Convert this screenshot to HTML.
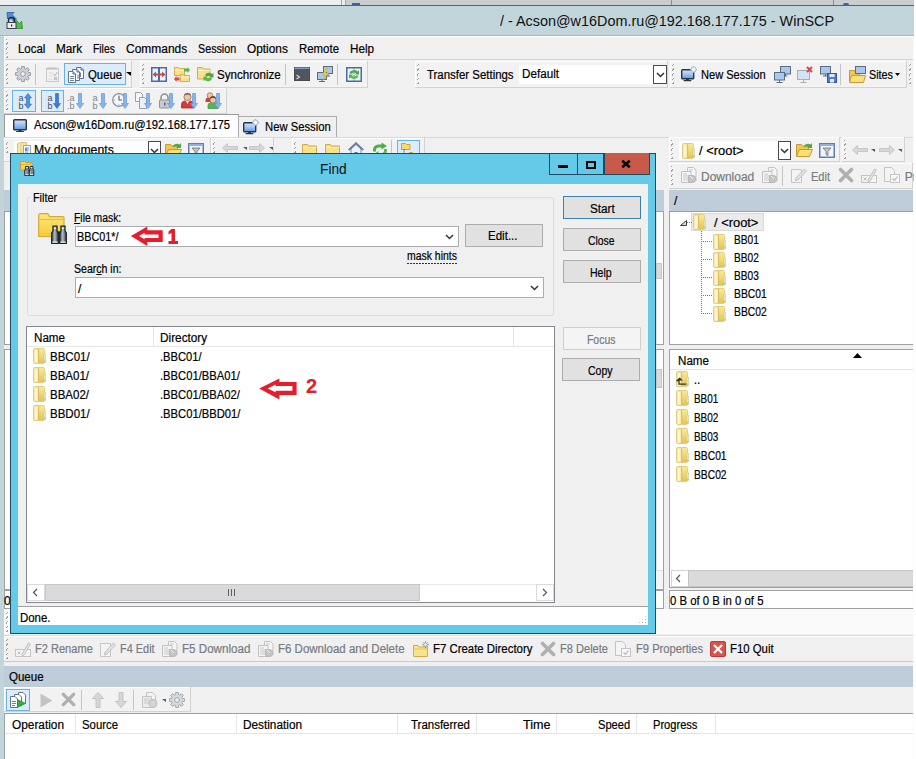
<!DOCTYPE html>
<html><head><meta charset="utf-8">
<style>
*{margin:0;padding:0;box-sizing:border-box}
html,body{width:916px;height:759px;overflow:hidden;background:#f0f0f0;font-family:"Liberation Sans",sans-serif;font-size:12px;color:#000}
.a{position:absolute}
.t{position:absolute;white-space:nowrap;line-height:14px;transform-origin:0 0;-webkit-text-stroke:0.2px currentColor}
.g{color:#787b80}
.grip{position:absolute;width:2px;background:repeating-linear-gradient(-50deg,transparent 0 0.6px,#a0a0a0 0.6px 1.5px,#fff 1.5px 2.2px,transparent 2.2px 3px)}
.sep{position:absolute;width:1px;background:#c4c4c4}
svg.i{position:absolute;overflow:visible}
.tb{position:absolute;background:#f2f2f2;border-bottom:1px solid #d2d2d2;border-right:1px solid #d2d2d2;box-shadow:inset 1px 1px 0 #fff}
.btn{position:absolute;background:#e1e1e1;border:1px solid #adadad}
</style></head><body>
<svg width="0" height="0" style="position:absolute">
<defs>
<linearGradient id="fy" x1="0" y1="0" x2="1" y2="0"><stop offset="0" stop-color="#f8e7a6"/><stop offset="1" stop-color="#e9c860"/></linearGradient>
<symbol id="gear" viewBox="0 0 16 16"><path d="M13.40 6.51 L15.59 6.68 L15.59 9.32 L13.40 9.49 L12.87 10.76 L14.30 12.43 L12.43 14.30 L10.76 12.87 L9.49 13.40 L9.32 15.59 L6.68 15.59 L6.51 13.40 L5.24 12.87 L3.57 14.30 L1.70 12.43 L3.13 10.76 L2.60 9.49 L0.41 9.32 L0.41 6.68 L2.60 6.51 L3.13 5.24 L1.70 3.57 L3.57 1.70 L5.24 3.13 L6.51 2.60 L6.68 0.41 L9.32 0.41 L9.49 2.60 L10.76 3.13 L12.43 1.70 L14.30 3.57 L12.87 5.24Z" fill="#cdd1d6" stroke="#8d9399" stroke-width="0.9"/><circle cx="8" cy="8" r="2.3" fill="#f4f4f4" stroke="#8d9399" stroke-width="0.9"/></symbol>
<symbol id="gearg" viewBox="0 0 16 16"><path d="M13.40 6.51 L15.59 6.68 L15.59 9.32 L13.40 9.49 L12.87 10.76 L14.30 12.43 L12.43 14.30 L10.76 12.87 L9.49 13.40 L9.32 15.59 L6.68 15.59 L6.51 13.40 L5.24 12.87 L3.57 14.30 L1.70 12.43 L3.13 10.76 L2.60 9.49 L0.41 9.32 L0.41 6.68 L2.60 6.51 L3.13 5.24 L1.70 3.57 L3.57 1.70 L5.24 3.13 L6.51 2.60 L6.68 0.41 L9.32 0.41 L9.49 2.60 L10.76 3.13 L12.43 1.70 L14.30 3.57 L12.87 5.24Z" fill="#d6d9dc" stroke="#9a9fa4" stroke-width="0.9"/><circle cx="8" cy="8" r="2.3" fill="#f0f0f0" stroke="#9a9fa4" stroke-width="0.9"/></symbol>
<symbol id="note" viewBox="0 0 16 16"><rect x="1.5" y="2.5" width="12" height="13" fill="#f3f3f3" stroke="#c9c9c9"/><path d="M3 1v3M5 1v3M7 1v3M9 1v3M11 1v3" stroke="#bdbdbd"/><path d="M3.5 7h5M3.5 10h4M3.5 13h4" stroke="#d6d6d6"/><path d="M8.5 8l1.5 1.5 2.5-3.5" stroke="#c3c3c3" fill="none" stroke-width="1.2"/><path d="M9 11l3 3M12 11l-3 3" stroke="#bdbdbd" stroke-width="1.3"/></symbol>
<symbol id="docs" viewBox="0 0 16 16"><path d="M8.5 0.5H13L15.5 3V11.5H8.5Z" fill="#fff" stroke="#5f7389"/><path d="M13 0.5V3H15.5" fill="none" stroke="#5f7389"/><path d="M4.5 2.5H9L11.5 5V13.5H4.5Z" fill="#fff" stroke="#5f7389"/><path d="M9 2.5V5H11.5" fill="none" stroke="#5f7389"/><path d="M0.5 4.5H5L7.5 7V15.5H0.5Z" fill="#fff" stroke="#5f7389"/><path d="M5 4.5V7H7.5" fill="none" stroke="#5f7389"/><path d="M2 9.5H6M2 11.5H6M2 13.5H6M12.5 5.5V10M10 7.5V12" stroke="#6d8096"/></symbol>
<symbol id="compare" viewBox="0 0 16 15"><rect x="0.75" y="0.75" width="14.5" height="13.5" fill="#eef4fb" stroke="#4a6ca3" stroke-width="1.5"/><rect x="7" y="0.5" width="2" height="14" fill="#4a6ca3"/><path d="M1.5 7.5L5 4.5V6.5H11V4.5L14.5 7.5L11 10.5V8.5H5V10.5Z" fill="#c44d49"/></symbol>
<symbol id="fsync" viewBox="0 0 16 16"><path d="M0.5 1.5h4l1 1h5v7h-10z" fill="#f8e08c" stroke="#d2ab4e"/><path d="M0.5 4h10" stroke="#fff3c4"/><path d="M6.5 8.5h3l1 1h5v6h-9z" fill="#f8e08c" stroke="#d2ab4e"/><path d="M6.5 11h9" stroke="#fff3c4"/><path d="M10 2.5h3.5v-1.5l2.5 3l-2.5 3v-1.5h-3.5z" fill="#5ab44c"/><path d="M5.5 14.5h-3v1.5l-2.5-3l2.5-3v1.5h3z" fill="#e04848"/></symbol>
<symbol id="fsync2" viewBox="0 0 17 17"><path d="M0.5 1.5h5l1 1.5h6.5v10h-12.5z" fill="#f8e08c" stroke="#d2ab4e"/><path d="M1 4.5h12" stroke="#fff3c4"/><path d="M8 9.5a4 3.5 0 0 1 7-1.5l1.5-1v4.5h-4.5l1.5-1a2.5 2 0 0 0-4 0z" fill="#4ba34a"/><path d="M15 12.5a4 3.5 0 0 1-7 1.5l-1.5 1v-4.5h4.5l-1.5 1a2.5 2 0 0 0 4 0z" fill="#5ab84f"/></symbol>
<symbol id="term" viewBox="0 0 16 14"><rect x="0" y="0" width="16" height="14" fill="#51565d"/><rect x="0" y="0" width="16" height="2" fill="#7f9cc6"/><rect x="0" y="0" width="16" height="14" fill="none" stroke="#40454b"/><path d="M2.5 8l3 2-3 2" stroke="#dde" fill="none" stroke-width="1.1"/></symbol>
<symbol id="putty" viewBox="0 0 16 16"><rect x="6.5" y="0.5" width="9" height="7" fill="#a9c8ef" stroke="#5b6b80"/><path d="M9 10h4M11 8v2" stroke="#5b6b80"/><rect x="0.5" y="6.5" width="9" height="7" fill="#a9c8ef" stroke="#5b6b80"/><path d="M2 15.5h6M5 13.5v2" stroke="#5b6b80"/><path d="M10 1L5.5 8.5h3l-3 6.5 6-8h-3l2.5-6z" fill="#f4d545" stroke="#c7a12a" stroke-width="0.5"/></symbol>
<symbol id="rfbox" viewBox="0 0 16 15"><rect x="0.75" y="0.75" width="14.5" height="13.5" fill="#e9f3f4" stroke="#4a6ca3" stroke-width="1.5"/><path d="M8 1.5v12" stroke="#4a6ca3" stroke-dasharray="1 1.2"/><path d="M3.5 6a4.5 3.5 0 0 1 8-1.5l1.5-1.2v4.2h-4.2l1.3-1a2.8 2 0 0 0-5 .5z" fill="#54a24c"/><path d="M12.5 9a4.5 3.5 0 0 1-8 1.5l-1.5 1.2v-4.2h4.2l-1.3 1a2.8 2 0 0 0 5-.5z" fill="#5fb354"/></symbol>
<symbol id="ab" viewBox="0 0 8 16"><text x="0.5" y="7.5" font-family="Liberation Sans" font-size="9" fill="currentColor">a</text><text x="0.5" y="15.5" font-family="Liberation Sans" font-size="9" fill="currentColor">b</text></symbol>
<symbol id="darr" viewBox="0 0 8 16"><path d="M2.5 0.5h3v10h2l-3.5 5l-3.5-5h2z" fill="currentColor" stroke="#2f63b5" stroke-width="0.6"/></symbol>
<symbol id="darrl" viewBox="0 0 8 16"><path d="M2.5 0.5h3v10h2l-3.5 5l-3.5-5h2z" fill="#86b4ec" stroke="#5b8fd6" stroke-width="0.6"/></symbol>
<symbol id="udarr" viewBox="0 0 8 16"><path d="M4 0.5l3.5 4.5h-2v6h2l-3.5 4.5l-3.5-4.5h2v-6h-2z" fill="#4f92e3" stroke="#2f63b5" stroke-width="0.6"/></symbol>
<symbol id="mon" viewBox="0 0 14 13"><defs><linearGradient id="scr" x1="0" y1="0" x2="0" y2="1"><stop offset="0" stop-color="#d6e6fb"/><stop offset="0.45" stop-color="#a8c8f4"/><stop offset="1" stop-color="#5b9bf0"/></linearGradient></defs><rect x="0.7" y="0.7" width="12.6" height="10" rx="0.8" fill="url(#scr)" stroke="#2c3540" stroke-width="1.4"/><rect x="5.5" y="11" width="3" height="1" fill="#2c3540"/><rect x="3" y="12" width="8" height="1.2" rx="0.6" fill="#2c3540"/></symbol>
<symbol id="monstar" viewBox="0 0 16 16"><rect x="0.7" y="3.7" width="12" height="9" rx="0.8" fill="url(#scr)" stroke="#2c3540" stroke-width="1.4"/><rect x="5" y="13" width="3" height="1" fill="#2c3540"/><rect x="2.5" y="14" width="8" height="1.2" rx="0.6" fill="#2c3540"/><circle cx="12.5" cy="3.5" r="2.6" fill="#f4f7fb" stroke="#8fa6c4" stroke-width="0.8"/><path d="M12.5 0v1.2M12.5 5.8v1.2M9 3.5h1.2M14.8 3.5h1.2" stroke="#8fa6c4" stroke-width="0.8"/></symbol>
<symbol id="fold" viewBox="0 0 13 16"><defs><linearGradient id="ffg" x1="0" y1="0" x2="0" y2="1"><stop offset="0" stop-color="#f7ea98"/><stop offset="1" stop-color="#e6c455"/></linearGradient></defs><rect x="0.5" y="0.5" width="11" height="15" rx="1.2" fill="#f5e6a6" stroke="#e2cc80"/><rect x="1.8" y="2" width="2.6" height="12.5" fill="#fbf5d2"/><path d="M5.6 1H11.2V15H5.6Z" fill="url(#ffg)"/><path d="M5.6 1.2V15" stroke="#d9b955" stroke-width="0.9"/><path d="M11 6H12.5V14.5H11Z" fill="#f1f1d2" stroke="#c9c98e" stroke-width="0.6"/><path d="M11.3 12.5H12.3V14.3H11.3Z" fill="#9cc28a"/></symbol>
<symbol id="foldup" viewBox="0 0 13 16"><use href="#fold"/><path d="M3.8 7.2L1.2 9.6h1.8v3.6h7.2" fill="none" stroke="#3b3420" stroke-width="1.3"/><path d="M3.8 6.4L0.8 9.6h6z" fill="#3b3420"/></symbol>
<symbol id="fopen" viewBox="0 0 17 15"><path d="M0.5 2.5h5l1 1.5h6v10h-12z" fill="#efc94f" stroke="#c79a32"/><path d="M0.5 14.5l3-7h13l-3 7z" fill="#fbe07a" stroke="#c79a32"/><path d="M8 4.5a4 3 0 0 1 6.5-2l1.5-1.5v5h-5l1.5-1.3a2.5 2 0 0 0-3.5.8z" fill="#4fa84a"/></symbol>
<symbol id="filter" viewBox="0 0 16 15"><rect x="0.75" y="0.75" width="14.5" height="13.5" fill="#f2f6fb" stroke="#5f7fb0" stroke-width="1.5"/><rect x="1" y="1" width="14" height="2" fill="#8fb1dd"/><path d="M4 5h8l-3 3.5v4l-2 -1v-3z" fill="#c0c4c8" stroke="#6e7378" stroke-width="0.8"/></symbol>
<symbol id="back" viewBox="0 0 16 10"><path d="M0.5 5l5-4.5v3h10v3h-10v3z" fill="#d7d7d7" stroke="#c6c6c6"/></symbol>
<symbol id="fwd" viewBox="0 0 16 10"><path d="M15.5 5l-5-4.5v3h-10v3h10v3z" fill="#d7d7d7" stroke="#c6c6c6"/></symbol>
<symbol id="fyel" viewBox="0 0 15 14"><path d="M0.5 1.5h5l1 1.5h8v10.5h-14z" fill="#f8e08c" stroke="#cfa84a"/><path d="M1 4.5h13.5" stroke="#fff0b8"/></symbol>
<symbol id="home" viewBox="0 0 16 15"><path d="M3 7v7.5h10v-7.5l-5-4.5z" fill="#eef2f8" stroke="#7a8ea9"/><path d="M0.8 8l7.2-6.8 7.2 6.8" fill="none" stroke="#687d99" stroke-width="1.8"/><rect x="6.5" y="10" width="3" height="4.5" fill="#4e77b5"/></symbol>
<symbol id="rfgreen" viewBox="0 0 16 16"><path d="M2.5 9.5V8a4 4 0 0 1 4-4H10" fill="none" stroke="#4fae4b" stroke-width="3"/><path d="M9.5 0.5L15 4L9.5 7.5Z" fill="#4fae4b"/><path d="M13.5 7V8.5a4 4 0 0 1-4 4H6" fill="none" stroke="#5cbb55" stroke-width="3"/><path d="M6.5 9L1 12.5L6.5 16Z" fill="#5cbb55"/></symbol>
<symbol id="dl" viewBox="0 0 16 16"><path d="M6.5 0.5h6l2.5 2.5v7h-8.5z" fill="#f6f6f6" stroke="#c2c2c2"/><path d="M8 3h4" stroke="#c6c6c6"/><path d="M0.5 4.5h9.5v11h-9.5z" fill="#f6f6f6" stroke="#c2c2c2"/><path d="M2 7h4M2 9h6M2 11h6M2 13h6" stroke="#c8c8c8"/><path d="M7.5 8.5h5l2.5 2v3l-2 2h-5.5z" fill="#c4c4c4" stroke="#b4b4b4" stroke-width="0.8"/><path d="M9 9l3 3" stroke="#f4f4f4"/></symbol>
<symbol id="edit" viewBox="0 0 16 16"><path d="M0.5 2.5h10v13h-10z" fill="#f4f4f4" stroke="#c6c6c6"/><path d="M5 11l8.5-9 2 2-8.5 9-2.5 .8z" fill="#e2e2e2" stroke="#b5b5b5" stroke-width="0.8"/></symbol>
<symbol id="xg" viewBox="0 0 16 16"><path d="M2.5 2.5l11 11M13.5 2.5l-11 11" stroke="#b0b0b0" stroke-width="3.6" stroke-linecap="round"/></symbol>
<symbol id="ren" viewBox="0 0 16 16"><rect x="0.5" y="8.5" width="15" height="7" fill="#f4f4f4" stroke="#c4c4c4"/><path d="M2.5 10.5l3 3M5.5 10.5l-3 3" stroke="#c0c0c0"/><path d="M7 13l6.5-11 1.8 1.2-6.3 11-1.6.5z" fill="#e4e4e4" stroke="#b8b8b8" stroke-width="0.8"/></symbol>
<symbol id="props" viewBox="0 0 16 16"><path d="M0.5 0.5h7l3 3v11h-10z" fill="#f4f4f4" stroke="#c4c4c4"/><rect x="6.5" y="7.5" width="9" height="8" fill="#f8f8f8" stroke="#c4c4c4"/><path d="M8.5 11.5l2 2 3-4" stroke="#b3b3b3" fill="none" stroke-width="1.1"/></symbol>
<symbol id="fnew" viewBox="0 0 16 16"><path d="M0.5 4.5h4.5l1.2 1.5h8.3v9.5h-14z" fill="#f9e38c" stroke="#d3ac48"/><path d="M1 8h13.5" stroke="#e6c45a"/><path d="M12.5 0.2v2M12.5 5v2.2M9.2 3.6h2M13.8 3.6h2.2M10.2 1.3l1.2 1.2M13.6 4.7l1.2 1.2M14.8 1.3l-1.2 1.2M11.4 4.7l-1.2 1.2" stroke="#8193ab" stroke-width="0.9"/><circle cx="12.5" cy="3.6" r="1.7" fill="#fff" stroke="#8193ab" stroke-width="0.8"/></symbol>
<symbol id="quit" viewBox="0 0 16 16"><rect x="0.5" y="0.5" width="15" height="15" rx="1.5" fill="#d9534f" stroke="#b93a37"/><path d="M4 4l8 8M12 4l-8 8" stroke="#fff" stroke-width="2.2"/></symbol>
<symbol id="qdocs" viewBox="0 0 16 16"><path d="M8.5 0.5H13L15.5 3V11.5H8.5Z" fill="#fff" stroke="#5f7389"/><path d="M4.5 2.5H9L11.5 5V13.5H4.5Z" fill="#fff" stroke="#5f7389"/><path d="M0.5 4.5H5L7.5 7V15.5H0.5Z" fill="#fff" stroke="#5f7389"/><path d="M2 9.5H6M2 11.5H6M2 13.5H5" stroke="#6d8096"/><path d="M7.5 7.5L15.5 11.5L7.5 15.5Z" fill="#2fae3c" stroke="#1f8a2c" stroke-width="0.6"/></symbol>
<symbol id="play" viewBox="0 0 13 15"><path d="M0.5 0.5L12.5 7.5L0.5 14.5Z" fill="#c4c4c4"/></symbol>
<symbol id="uarr" viewBox="0 0 12 16"><path d="M6 0.5l5.5 6h-3.5v9h-4v-9h-3.5z" fill="#d6d6d6" stroke="#c3c3c3"/></symbol>
<symbol id="darrg" viewBox="0 0 12 16"><path d="M6 15.5l5.5-6h-3.5v-9h-4v9h-3.5z" fill="#d6d6d6" stroke="#c3c3c3"/></symbol>
<symbol id="qcirc" viewBox="0 0 16 16"><path d="M4.5 0.5h6l3 3v6h-9z" fill="#f2f2f2" stroke="#c4c4c4"/><path d="M0.5 4.5h9v11h-9z" fill="#ececec" stroke="#c4c4c4"/><path d="M2 7h6M2 9h6M2 11h5" stroke="#c8c8c8"/><circle cx="11" cy="11.5" r="4" fill="#d4d4d4" stroke="#bdbdbd"/></symbol>
<symbol id="findic" viewBox="0 0 16 16"><path d="M0.5 1.5h4.5l1 1.2h6v7.3h-11.5z" fill="#f5d353" stroke="#c9a12e"/><path d="M1 4.5h11" stroke="#e6bb36"/><path d="M5.5 6.5h3v2.5l.8 1v5.5h-4.6v-5.5l.8-1z" fill="#7d8893" stroke="#22282e" stroke-width="0.9"/><path d="M10 6.5h3v2.5l.8 1v5.5h-4.6v-5.5l.8-1z" fill="#7d8893" stroke="#22282e" stroke-width="0.9"/><path d="M8.6 11h1.6" stroke="#22282e" stroke-width="1.2"/><path d="M6.2 7.5h1.6M10.7 7.5h1.6M5.5 14.6h3M10 14.6h3" stroke="#eef1f4" stroke-width="0.9"/><path d="M6 11v3M10.5 11v3" stroke="#b9c1c9" stroke-width="0.8"/></symbol>
<symbol id="fbino" viewBox="0 0 30 31"><defs><linearGradient id="fyg" x1="0" y1="0" x2="0" y2="1"><stop offset="0" stop-color="#fbe47a"/><stop offset="1" stop-color="#f4cf3a"/></linearGradient><linearGradient id="bng" x1="0" y1="0" x2="1" y2="0"><stop offset="0" stop-color="#3e474f"/><stop offset="0.45" stop-color="#b4bcc4"/><stop offset="1" stop-color="#39414a"/></linearGradient></defs><path d="M0.7 2.2q0-1.5 1.5-1.5h7.5l2 3h13q1.3 0 1.3 1.3v18.5h-25.3z" fill="url(#fyg)" stroke="#d2a93a" stroke-width="1.2"/><path d="M1.5 6.5h24" stroke="#e4bb40" stroke-width="1"/><path d="M1.5 20.5h24" stroke="#e7c24a" stroke-width="0.8"/><path d="M15 13.2h4v4.5l1.3 2.3v10.3h-6.6v-10.3l1.3-2.3z" fill="url(#bng)" stroke="#1c2228" stroke-width="1.3"/><path d="M23 13.2h4v4.5l1.3 2.3v10.3h-6.6v-10.3l1.3-2.3z" fill="url(#bng)" stroke="#1c2228" stroke-width="1.3"/><path d="M19.6 19.5h3" stroke="#1c2228" stroke-width="2.2"/><path d="M15.8 15.2h2.4M23.8 15.2h2.4" stroke="#e8ecef" stroke-width="1.6"/><path d="M14.3 29.2h5.4M22.3 29.2h5.4" stroke="#e8ecef" stroke-width="1.2"/></symbol>
<symbol id="treetgl" viewBox="0 0 16 16"><path d="M0.5 1.5h4l1 1h3.5v5h-8.5z" fill="#f6db6e" stroke="#c9a23a"/><path d="M8.5 10.5h3l1 1h3v4h-7z" fill="#f6db6e" stroke="#c9a23a"/><path d="M3 7.5v6.5h5" stroke="#333" stroke-dasharray="1 1" fill="none"/></symbol>
<symbol id="rarrow" viewBox="0 0 32 20"><path d="M1.5 10L16.5 1.2V4.8H31.5V15.2H16.5V18.8Z" fill="none" stroke="#e41e2a" stroke-width="3.3" stroke-linejoin="miter"/></symbol>
<symbol id="clk" viewBox="0 0 17 17"><circle cx="7" cy="8" r="6.3" fill="#f4f5f6" stroke="#8f959b" stroke-width="1.3"/><path d="M7 4v4h3" stroke="#5d646b" fill="none" stroke-width="1.1"/><path d="M7 2.5v1M7 12.5v1M1.8 8h1M11.2 8h1" stroke="#8f959b"/></symbol>
<symbol id="files2" viewBox="0 0 17 17"><path d="M0.5 0.5h5l2 2v7h-7z" fill="#f6f8fa" stroke="#9aa2ab"/><path d="M4.5 5.5h5l2 2v9h-7z" fill="#eaf0f6" stroke="#9aa2ab"/></symbol>
<symbol id="lock" viewBox="0 0 17 17"><path d="M3 8V5.5a3.5 3.5 0 0 1 7 0V8" fill="none" stroke="#8e949a" stroke-width="1.6"/><rect x="1.5" y="8" width="10" height="8" rx="0.8" fill="#c7cbcf" stroke="#8e949a"/><rect x="6" y="10.5" width="1.5" height="3" fill="#5d646b"/></symbol>
<symbol id="person" viewBox="0 0 17 17"><circle cx="6.5" cy="5" r="3.6" fill="#e9c9a4" stroke="#8f6a48" stroke-width="0.8"/><path d="M3 3.5a3.6 3.2 0 0 1 7 0q-3.5 -1.5 -7 0z" fill="#8b6845"/><path d="M0.5 16v-3.5q0-3 3-3.5l3 2 3-2q3 .5 3 3.5v3.5z" fill="#d63a3a" stroke="#a52626" stroke-width="0.8"/><path d="M5.5 10l1 2 1-2" fill="#fff"/></symbol>
<symbol id="group" viewBox="0 0 17 17"><circle cx="5" cy="3.5" r="2.8" fill="#e9c9a4" stroke="#8f6a48" stroke-width="0.7"/><path d="M0.5 10v-2q0-2 2-2.5l2.5 1 2.5-1q2 .5 2 2.5v2z" fill="#d63a3a"/><circle cx="8" cy="8" r="3" fill="#e9c9a4" stroke="#8f6a48" stroke-width="0.7"/><path d="M5 6.5a3 2.6 0 0 1 6 0q-3-1.2-6 0z" fill="#6b4e32"/><path d="M3 16.5v-3q0-2.3 2.5-2.8l2.5 1.3 2.5-1.3q2.5.5 2.5 2.8v3z" fill="#55b552" stroke="#3f8c3d" stroke-width="0.7"/></symbol>
<symbol id="chev" viewBox="0 0 9 6"><path d="M1 1l3.5 3.5L8 1" fill="none" stroke="#333" stroke-width="1.5"/></symbol>
<symbol id="mons2" viewBox="0 0 17 17"><rect x="6.5" y="0.5" width="10" height="7.5" fill="#a9c8ef" stroke="#5b6b80"/><path d="M9.5 10h4M11.5 8v2" stroke="#5b6b80"/><rect x="0.5" y="6.5" width="10" height="7.5" fill="#a9c8ef" stroke="#5b6b80"/><path d="M2.5 16.5h6M5.5 14v2.5" stroke="#5b6b80"/></symbol>
<symbol id="mondel" viewBox="0 0 17 17"><rect x="0.5" y="4.5" width="12" height="9" fill="#d5e2f1" stroke="#a6aeb8"/><path d="M3.5 16.5h6M6.5 13.5v3" stroke="#a6aeb8"/><path d="M10 1l5 5M15 1l-5 5" stroke="#d8454a" stroke-width="2"/></symbol>
<symbol id="monsave" viewBox="0 0 17 17"><rect x="0.5" y="0.5" width="10" height="7.5" fill="#a9c8ef" stroke="#5b6b80"/><path d="M3 10h5M5.5 8v2" stroke="#5b6b80"/><rect x="7.5" y="7.5" width="9" height="9" fill="#4b7fc9" stroke="#2f5a9a"/><rect x="9.5" y="8" width="5" height="3" fill="#dfe9f6"/><rect x="10" y="13" width="4" height="3.5" fill="#dfe9f6"/></symbol>
<symbol id="sites" viewBox="0 0 17 17"><path d="M0.5 4.5h5l1 1.5h4v10h-10z" fill="#efc94f" stroke="#c79a32"/><path d="M0.5 16.5l2-7h14l-2 7z" fill="#fbe07a" stroke="#c79a32"/><rect x="6.5" y="0.5" width="10" height="7" fill="#a9c8ef" stroke="#5b6b80"/></symbol>

<symbol id="winscp" viewBox="0 0 17 17"><path d="M1 0.5h7l-2 2 4.5 4.5-2.5 2.5-4.5-4.5-2 2z" fill="#4a8fe0" stroke="#2a5fa8" stroke-width="0.8"/><path d="M16.5 16.5h-8l2.2-2.2-4-4 2.8-2.8 4 4 2.2-2.2z" fill="#4fbf4a" stroke="#2f8c32" stroke-width="0.8"/><path d="M2.5 10.5v-2a3 3 0 0 1 6 0v2" fill="none" stroke="#1f2a38" stroke-width="1.4"/><rect x="1" y="10.5" width="9" height="6" fill="#e8ecef" stroke="#3c4450"/><rect x="5" y="12.5" width="1.2" height="2" fill="#222"/></symbol>
<symbol id="mydocs" viewBox="0 0 14 16"><path d="M0.5 1.5L4 0.5H9.5V15.5H0.5Z" fill="#f5e6a6" stroke="#dcc37a"/><path d="M4 1V15" stroke="#e8cf78"/><rect x="6.5" y="3.5" width="7" height="10" fill="#fff" stroke="#9aa6b4"/><path d="M8 6h4M8 8h4M8 10h3" stroke="#5b8fd6"/><rect x="8" y="6.5" width="2" height="2" fill="#3f7ad6"/></symbol>
</defs>
</svg>

<!-- background window strip -->
<div class="a" style="left:0;top:0;width:916px;height:5px;background:#eceeef"></div>
<div class="a" style="left:345px;top:0;width:571px;height:5px;background:#c9cdcd"></div><div class="a" style="left:671px;top:0;width:1px;height:5px;background:#8a8e90"></div><div class="a" style="left:833px;top:0;width:1px;height:5px;background:#8a8e90"></div><div class="a" style="left:843px;top:3px;width:6px;height:2px;background:#3c64a0;border-radius:3px 3px 0 0"></div>
<div class="a" style="left:341px;top:0;width:1px;height:5px;background:#a7a9ab"></div>
<div class="a" style="left:345px;top:0;width:1px;height:5px;background:#a7a9ab"></div>
<div class="a" style="left:352px;top:3px;width:8px;height:2px;background:#3c64a0"></div>
<div class="a" style="left:0;top:5px;width:916px;height:1px;background:#5e6366"></div>
<!-- title bar / frame -->
<div class="a" style="left:0;top:6px;width:916px;height:753px;background:#c2d5da"></div>
<div class="t" style="left:500px;top:12px;font-size:15px;line-height:18px;color:#111;-webkit-text-stroke:0;transform:scaleX(0.9594)">/ - Acson@w16Dom.ru@192.168.177.175 - WinSCP</div>

<div class="a" style="left:0;top:35px;width:916px;height:1px;background:#aab6ba"></div>
<!-- main window client -->
<div class="a" style="left:4px;top:36px;width:909px;height:723px;background:#f0f0f0"></div>
<div class="a" style="left:913px;top:36px;width:3px;height:723px;background:#fafafa"></div>

<!-- menu bar -->
<div class="a" style="left:4px;top:36px;width:909px;height:24px;background:#f0f0f0;border-top:1px solid #fff;border-left:1px solid #fff;border-bottom:1px solid #d5d5d5"></div>
<div class="grip" style="left:6px;top:39px;height:19px"></div>
<div class="t" style="left:17.5px;top:42px;transform:scaleX(0.9516)">Local</div>
<div class="t" style="left:55.7px;top:42px;transform:scaleX(0.9823)">Mark</div>
<div class="t" style="left:92.8px;top:42px;transform:scaleX(0.8602)">Files</div>
<div class="t" style="left:125.5px;top:42px;transform:scaleX(0.9974)">Commands</div>
<div class="t" style="left:197.5px;top:42px;transform:scaleX(0.8945)">Session</div>
<div class="t" style="left:246.6px;top:42px;transform:scaleX(0.9865)">Options</div>
<div class="t" style="left:299px;top:42px;transform:scaleX(0.9517)">Remote</div>
<div class="t" style="left:349.9px;top:42px;transform:scaleX(0.9722)">Help</div>

<!-- toolbar row 1 -->
<div class="tb" style="left:4px;top:61px;width:128px;height:27px"></div>
<div class="grip" style="left:6px;top:64px;height:20px"></div>
<div class="sep" style="left:35px;top:64px;height:21px"></div>
<div class="a" style="left:64px;top:63px;width:62px;height:22px;background:#dcecfc;border:1px solid #69b3e3"></div>
<div class="t" style="left:88.4px;top:68px;transform:scaleX(0.9464)">Queue</div>
<div class="tb" style="left:140px;top:61px;width:228px;height:27px"></div>
<div class="grip" style="left:142px;top:64px;height:20px"></div>
<div class="t" style="left:217.3px;top:68px;transform:scaleX(0.9645)">Synchronize</div>
<div class="sep" style="left:285px;top:64px;height:21px"></div>
<div class="sep" style="left:337px;top:64px;height:21px"></div>
<div class="tb" style="left:415px;top:61px;width:253px;height:27px"></div>
<div class="grip" style="left:417px;top:64px;height:20px"></div>
<div class="t" style="left:427px;top:68px;transform:scaleX(0.9523)">Transfer Settings</div>
<div class="a" style="left:519px;top:65px;width:148px;height:19px;background:#fff"></div>
<div class="t" style="left:522px;top:67px;transform:scaleX(0.9729)">Default</div>
<div class="a" style="left:653px;top:65px;width:14px;height:19px;background:#fff;border:1px solid #4a4a4a"></div>
<div class="tb" style="left:670px;top:61px;width:237px;height:27px"></div>
<div class="grip" style="left:672px;top:64px;height:20px"></div>
<div class="t" style="left:701.4px;top:68px;transform:scaleX(0.9224)">New Session</div>
<div class="sep" style="left:840px;top:64px;height:21px"></div>
<div class="t" style="left:869px;top:68px;transform:scaleX(0.8993)">Sites</div>
<div class="grip" style="left:909px;top:64px;height:20px"></div>

<!-- toolbar row 2 -->
<div class="tb" style="left:4px;top:88px;width:223px;height:26px"></div>
<div class="grip" style="left:6px;top:91px;height:19px"></div>
<div class="a" style="left:12px;top:90px;width:24px;height:22px;background:#dcecfc;border:1px solid #69b3e3"></div>
<div class="a" style="left:41px;top:90px;width:23px;height:22px;background:#dcecfc;border:1px solid #69b3e3"></div>

<!-- tabs -->
<div class="a" style="left:4px;top:137px;width:909px;height:1px;background:#d9d9d9"></div>
<div class="a" style="left:4px;top:114px;width:235px;height:23px;background:#fff;border:1px solid #9c9c9c;border-bottom:none"></div>
<div class="t" style="left:34px;top:118px;transform:scaleX(0.9371)">Acson@w16Dom.ru@192.168.177.175</div>
<div class="a" style="left:238px;top:116px;width:99px;height:21px;background:#f0f0f0;border:1px solid #adadad;border-bottom:none"></div>
<div class="t" style="left:265px;top:120px;transform:scaleX(0.9382)">New Session</div>

<!-- left panel (behind) toolbars -->
<div class="tb" style="left:4px;top:138px;width:207px;height:24px"></div>
<div class="a" style="left:14px;top:141px;width:147px;height:19px;background:#fff"></div>
<div class="t" style="left:33.8px;top:143px;transform:scaleX(1.0227)">My documents</div>
<div class="a" style="left:148px;top:141px;width:13px;height:19px;background:#fff;border:1px solid #4a4a4a"></div>
<div class="tb" style="left:211px;top:138px;width:63px;height:24px"></div>
<div class="tb" style="left:292px;top:138px;width:133px;height:24px"></div>
<div class="a" style="left:397px;top:140px;width:23px;height:20px;background:#dcecfc;border:1px solid #69b3e3"></div>
<!-- left panel remnants -->
<div class="a" style="left:4px;top:190px;width:660px;height:21px;background:#bfccd9"></div>
<div class="a" style="left:4px;top:211px;width:660px;height:134px;background:#fff;border:1px solid #a0a0a0"></div>
<div class="a" style="left:4px;top:349px;width:660px;height:241px;background:#fff;border:1px solid #a0a0a0"></div>
<div class="a" style="left:4px;top:590px;width:660px;height:19px;background:#fff;border:1px solid #a0a0a0"></div>
<div class="t" style="left:4px;top:594px">0</div>
<div class="a" style="left:656px;top:212px;width:7px;height:132px;background:#fff;border-left:1px solid #e0e0e0"></div>
<div class="a" style="left:656px;top:263px;width:6px;height:16px;background:#dadada;border:1px solid #c4c4c4"></div>
<div class="a" style="left:656px;top:350px;width:7px;height:220px;background:#fff;border-left:1px solid #e0e0e0"></div>
<div class="a" style="left:656px;top:369px;width:6px;height:19px;background:#dadada;border:1px solid #c4c4c4"></div>
<div class="a" style="left:656px;top:570px;width:7px;height:17px;background:#f4f4f4;border-top:1px solid #e0e0e0"></div>


<!-- right panel -->
<div class="tb" style="left:669px;top:137px;width:171px;height:25px"></div>
<div class="grip" style="left:671px;top:140px;height:19px"></div>
<div class="a" style="left:679px;top:141px;width:112px;height:19px;background:#fff"></div>
<div class="t" style="left:699.2px;top:144px;transform:scaleX(1.0779)">/ &lt;root&gt;</div>
<div class="a" style="left:778px;top:141px;width:13px;height:19px;background:#fff;border:1px solid #4a4a4a"></div>
<div class="tb" style="left:842px;top:137px;width:63px;height:25px"></div>
<div class="grip" style="left:844px;top:140px;height:19px"></div>
<div class="tb" style="left:669px;top:163px;width:244px;height:26px"></div>
<div class="grip" style="left:671px;top:166px;height:19px"></div>
<div class="t g" style="left:701px;top:170px;transform:scaleX(0.9967)">Download</div>
<div class="sep" style="left:782px;top:166px;height:20px"></div>
<div class="t g" style="left:811px;top:170px;transform:scaleX(0.9184)">Edit</div>
<div class="t g" style="left:904.7px;top:170px">Pr</div>

<div class="a" style="left:669px;top:190px;width:244px;height:21px;background:#bfccd9"></div>
<div class="t" style="left:674px;top:194px">/</div>
<div class="a" style="left:669px;top:211px;width:244px;height:134px;background:#fff;border-left:1px solid #a0a0a0;border-top:1px solid #a0a0a0;border-bottom:1px solid #a0a0a0"></div>
<div class="a" style="left:691px;top:213px;width:73px;height:18px;background:#ebebeb;border:1px solid #d9d9d9"></div>
<div class="t" style="left:714px;top:216px;transform:scaleX(1.0731)">/ &lt;root&gt;</div>
<div class="t" style="left:733.6px;top:233px;transform:scaleX(0.8447)">BB01</div>
<div class="t" style="left:733.6px;top:251px;transform:scaleX(0.8447)">BB02</div>
<div class="t" style="left:733.6px;top:269px;transform:scaleX(0.8447)">BB03</div>
<div class="t" style="left:733.6px;top:287px;transform:scaleX(0.8598)">BBC01</div>
<div class="t" style="left:733.6px;top:305px;transform:scaleX(0.8598)">BBC02</div>

<div class="a" style="left:669px;top:349px;width:244px;height:239px;background:#fff;border-left:1px solid #a0a0a0;border-top:1px solid #a0a0a0;border-bottom:1px solid #a0a0a0"></div>
<div class="a" style="left:670px;top:369px;width:243px;height:1px;background:#e5e5e5"></div>
<div class="t" style="left:677.9px;top:354px;transform:scaleX(0.9683)">Name</div>
<div class="t" style="left:693.7px;top:373px">..</div>
<div class="t" style="left:693.7px;top:392px;transform:scaleX(0.8277)">BB01</div>
<div class="t" style="left:693.7px;top:411px;transform:scaleX(0.8277)">BB02</div>
<div class="t" style="left:693.7px;top:430px;transform:scaleX(0.8277)">BB03</div>
<div class="t" style="left:693.7px;top:449px;transform:scaleX(0.8572)">BBC01</div>
<div class="t" style="left:693.7px;top:468px;transform:scaleX(0.8572)">BBC02</div>
<div class="a" style="left:671px;top:570px;width:18px;height:17px;background:#fff;border:1px solid #d4d4d4"></div>
<div class="a" style="left:688px;top:570px;width:225px;height:17px;background:#dadada;border:1px solid #c4c4c4;border-right:none"></div>
<div class="a" style="left:669px;top:590px;width:244px;height:19px;background:#fff;border:1px solid #a0a0a0;border-right:none"></div>
<div class="t" style="left:670px;top:594px;transform:scaleX(0.9470)">0 B of 0 B in 0 of 5</div>
<div class="a" style="left:4px;top:609px;width:909px;height:25px;background:#fafafa"></div>
<div class="grip" style="left:6px;top:611px;height:21px"></div>

<!-- function keys bar -->
<div class="a" style="left:4px;top:635px;width:909px;height:1px;background:#dadada"></div>
<div class="tb" style="left:4px;top:636px;width:909px;height:26px;background:#f0f0f0;border-bottom:1px solid #c9c9c9;border-right:none"></div>
<div class="grip" style="left:6px;top:639px;height:20px"></div>
<div class="t g" style="left:35.4px;top:642px;transform:scaleX(0.9218)">F2 Rename</div>
<div class="t g" style="left:119.9px;top:642px;transform:scaleX(0.9102)">F4 Edit</div>
<div class="t g" style="left:182px;top:642px;transform:scaleX(0.9672)">F5 Download</div>
<div class="t g" style="left:278.3px;top:642px;transform:scaleX(0.9584)">F6 Download and Delete</div>
<div class="t" style="left:433.2px;top:642px;transform:scaleX(0.9494)">F7 Create Directory</div>
<div class="t g" style="left:560.1px;top:642px;transform:scaleX(0.9225)">F8 Delete</div>
<div class="t g" style="left:635.6px;top:642px;transform:scaleX(0.9315)">F9 Properties</div>
<div class="t" style="left:730.4px;top:642px;transform:scaleX(0.9472)">F10 Quit</div>

<!-- queue -->
<div class="a" style="left:4px;top:666px;width:909px;height:21px;background:#bfccd9"></div>
<div class="t" style="left:9.4px;top:670px;transform:scaleX(0.9603)">Queue</div>
<div class="tb" style="left:4px;top:687px;width:187px;height:25px"></div>
<div class="a" style="left:6px;top:689px;width:24px;height:22px;background:#dcecfc;border:1px solid #69b3e3"></div>
<div class="sep" style="left:81px;top:690px;height:20px"></div>
<div class="sep" style="left:133px;top:690px;height:20px"></div>
<div class="a" style="left:4px;top:713px;width:909px;height:46px;background:#fff;border-top:1px solid #a0a0a0;border-left:1px solid #a0a0a0"></div>
<div class="a" style="left:5px;top:733px;width:908px;height:1px;background:#e5e5e5"></div>
<div class="a" style="left:75px;top:714px;width:1px;height:19px;background:#e5e5e5"></div>
<div class="a" style="left:236px;top:714px;width:1px;height:19px;background:#e5e5e5"></div>
<div class="a" style="left:397px;top:714px;width:1px;height:19px;background:#e5e5e5"></div>
<div class="a" style="left:476px;top:714px;width:1px;height:19px;background:#e5e5e5"></div>
<div class="a" style="left:556px;top:714px;width:1px;height:19px;background:#e5e5e5"></div>
<div class="a" style="left:636px;top:714px;width:1px;height:19px;background:#e5e5e5"></div>
<div class="a" style="left:715px;top:714px;width:1px;height:19px;background:#e5e5e5"></div>
<div class="t" style="left:12.4px;top:718px;transform:scaleX(0.9867)">Operation</div>
<div class="t" style="left:81.9px;top:718px;transform:scaleX(0.9466)">Source</div>
<div class="t" style="left:242.5px;top:718px;transform:scaleX(0.9826)">Destination</div>
<div class="t" style="left:410.8px;top:718px;transform:scaleX(0.9565)">Transferred</div>
<div class="t" style="left:522.8px;top:718px;transform:scaleX(1.0482)">Time</div>
<div class="t" style="left:597.5px;top:718px;transform:scaleX(0.9279)">Speed</div>
<div class="t" style="left:653.3px;top:718px;transform:scaleX(0.9244)">Progress</div>

<svg class="i" style="left:6px;top:12px" width="17" height="17"><use href="#winscp"/></svg>
<svg class="i" style="left:15px;top:66px" width="16" height="16"><use href="#gear"/></svg>
<svg class="i" style="left:45px;top:66px" width="16" height="16"><use href="#note"/></svg>
<svg class="i" style="left:68px;top:67px" width="16" height="16"><use href="#docs"/></svg>
<svg class="i" style="left:126px;top:72px" width="5" height="4"><path d="M0 0h5L5 4z" fill="#000"/></svg>
<svg class="i" style="left:151px;top:67px" width="16" height="15"><use href="#compare"/></svg>
<svg class="i" style="left:174px;top:66px" width="16" height="16"><use href="#fsync"/></svg>
<svg class="i" style="left:197px;top:66px" width="17" height="17"><use href="#fsync2"/></svg>
<svg class="i" style="left:294px;top:67px" width="16" height="14"><use href="#term"/></svg>
<svg class="i" style="left:317px;top:66px" width="16" height="16"><use href="#putty"/></svg>
<svg class="i" style="left:346px;top:67px" width="16" height="15"><use href="#rfbox"/></svg>
<svg class="i" style="left:655.5px;top:72px" width="9" height="6"><use href="#chev"/></svg>
<svg class="i" style="left:681px;top:66px" width="16" height="16"><use href="#monstar"/></svg>
<svg class="i" style="left:774px;top:66px" width="17" height="17"><use href="#mons2"/></svg>
<svg class="i" style="left:797px;top:66px" width="17" height="17"><use href="#mondel"/></svg>
<svg class="i" style="left:820px;top:66px" width="17" height="17"><use href="#monsave"/></svg>
<svg class="i" style="left:849px;top:66px" width="17" height="17"><use href="#sites"/></svg>
<svg class="i" style="left:895px;top:73px" width="5" height="3"><path d="M0 0h5L2.5 3z" fill="#000"/></svg>
<svg class="i" style="left:18px;top:93px;color:#3d4a5c" width="8" height="16"><use href="#ab"/></svg>
<svg class="i" style="left:24px;top:93px" width="8" height="16"><use href="#udarr"/></svg>
<svg class="i" style="left:47px;top:93px;color:#3d4a5c" width="8" height="16"><use href="#ab"/></svg>
<svg class="i" style="left:53px;top:93px;color:#3f7ad6" width="8" height="16"><use href="#darr"/></svg>
<svg class="i" style="left:67px;top:93px;color:#7c8590" width="9" height="16"><text x="0" y="7.5" font-family="Liberation Sans" font-size="9" fill="currentColor">.a</text><text x="0" y="15.5" font-family="Liberation Sans" font-size="9" fill="currentColor">.b</text></svg>
<svg class="i" style="left:76px;top:93px" width="8" height="16"><use href="#darrl"/></svg>
<svg class="i" style="left:92px;top:93px;color:#7c8590" width="8" height="16"><use href="#ab"/></svg>
<svg class="i" style="left:99px;top:93px" width="8" height="16"><use href="#darrl"/></svg>
<svg class="i" style="left:112px;top:92px" width="17" height="17"><use href="#clk"/></svg>
<svg class="i" style="left:121px;top:93px" width="8" height="16"><use href="#darrl"/></svg>
<svg class="i" style="left:135px;top:92px" width="17" height="17"><use href="#files2"/></svg>
<svg class="i" style="left:144px;top:93px" width="8" height="16"><use href="#darrl"/></svg>
<svg class="i" style="left:158px;top:92px" width="17" height="17"><use href="#lock"/></svg>
<svg class="i" style="left:167px;top:93px" width="8" height="16"><use href="#darrl"/></svg>
<svg class="i" style="left:181px;top:92px" width="17" height="17"><use href="#person"/></svg>
<svg class="i" style="left:190px;top:93px" width="8" height="16"><use href="#darrl"/></svg>
<svg class="i" style="left:205px;top:92px" width="17" height="17"><use href="#group"/></svg>
<svg class="i" style="left:214px;top:93px" width="8" height="16"><use href="#darrl"/></svg>
<svg class="i" style="left:13px;top:119px" width="14" height="13"><use href="#mon"/></svg>
<svg class="i" style="left:243px;top:119px" width="16" height="16"><use href="#monstar"/></svg>
<svg class="i" style="left:17px;top:142px" width="14" height="16"><use href="#mydocs"/></svg>
<svg class="i" style="left:150px;top:148px" width="9" height="6"><use href="#chev"/></svg>
<svg class="i" style="left:165px;top:142px" width="17" height="15"><use href="#fopen"/></svg>
<svg class="i" style="left:188px;top:143px" width="16" height="15"><use href="#filter"/></svg>
<svg class="i" style="left:222px;top:143px" width="16" height="10"><use href="#back"/></svg>
<svg class="i" style="left:249px;top:143px" width="16" height="10"><use href="#fwd"/></svg>
<svg class="i" style="left:243px;top:147px" width="4" height="3"><path d="M0 0h4L4 3z" fill="#555"/></svg>
<svg class="i" style="left:269px;top:147px" width="4" height="3"><path d="M0 0h4L4 3z" fill="#555"/></svg>
<div class="grip" style="left:213px;top:141px;height:12px"></div>
<div class="grip" style="left:294px;top:141px;height:12px"></div>
<div class="grip" style="left:6px;top:141px;height:12px"></div>
<svg class="i" style="left:302px;top:143px" width="15" height="14"><use href="#fyel"/></svg>
<svg class="i" style="left:325px;top:143px" width="15" height="14"><use href="#fyel"/></svg>
<svg class="i" style="left:348px;top:142px" width="16" height="15"><use href="#home"/></svg>
<svg class="i" style="left:372px;top:142px" width="16" height="16"><use href="#rfgreen"/></svg>
<svg class="i" style="left:401px;top:142px" width="16" height="16"><use href="#treetgl"/></svg>
<div class="sep" style="left:391px;top:140px;height:20px"></div>
<svg class="i" style="left:682px;top:143px" width="13" height="16"><use href="#fold"/></svg>
<svg class="i" style="left:780px;top:148px" width="9" height="6"><use href="#chev"/></svg>
<svg class="i" style="left:796px;top:142px" width="17" height="15"><use href="#fopen"/></svg>
<svg class="i" style="left:819px;top:143px" width="16" height="15"><use href="#filter"/></svg>
<svg class="i" style="left:852px;top:145px" width="16" height="10"><use href="#back"/></svg>
<svg class="i" style="left:879px;top:145px" width="16" height="10"><use href="#fwd"/></svg>
<svg class="i" style="left:871px;top:149px" width="4" height="3"><path d="M0 0h4L4 3z" fill="#555"/></svg>
<svg class="i" style="left:898px;top:149px" width="4" height="3"><path d="M0 0h4L4 3z" fill="#555"/></svg>
<svg class="i" style="left:681px;top:167px" width="16" height="16"><use href="#dl"/></svg>
<svg class="i" style="left:762px;top:167px" width="16" height="16"><use href="#dl"/></svg>
<svg class="i" style="left:791px;top:167px" width="16" height="16"><use href="#edit"/></svg>
<svg class="i" style="left:838px;top:167px" width="16" height="16"><use href="#xg"/></svg>
<svg class="i" style="left:861px;top:167px" width="16" height="16"><use href="#ren"/></svg>
<svg class="i" style="left:884px;top:167px" width="16" height="16"><use href="#props"/></svg>
<svg class="i" style="left:680px;top:220px" width="7" height="6"><path d="M6.5 0.5V5.5H0.5Z" fill="#d8d8d8" stroke="#404040"/></svg>
<div class="a" style="left:687px;top:222px;width:5px;height:1px;background:repeating-linear-gradient(to right,#777 0 1px,transparent 1px 2px)"></div>
<div class="a" style="left:701px;top:231px;width:1px;height:83px;background:repeating-linear-gradient(to bottom,#777 0 1px,transparent 1px 2px)"></div>
<div class="a" style="left:702px;top:241px;width:11px;height:1px;background:repeating-linear-gradient(to right,transparent 0 1px,#777 1px 2px)"></div>
<svg class="i" style="left:713px;top:234px" width="13" height="16"><use href="#fold"/></svg>
<div class="a" style="left:702px;top:259px;width:11px;height:1px;background:repeating-linear-gradient(to right,transparent 0 1px,#777 1px 2px)"></div>
<svg class="i" style="left:713px;top:252px" width="13" height="16"><use href="#fold"/></svg>
<div class="a" style="left:702px;top:277px;width:11px;height:1px;background:repeating-linear-gradient(to right,transparent 0 1px,#777 1px 2px)"></div>
<svg class="i" style="left:713px;top:270px" width="13" height="16"><use href="#fold"/></svg>
<div class="a" style="left:702px;top:295px;width:11px;height:1px;background:repeating-linear-gradient(to right,transparent 0 1px,#777 1px 2px)"></div>
<svg class="i" style="left:713px;top:288px" width="13" height="16"><use href="#fold"/></svg>
<div class="a" style="left:702px;top:313px;width:11px;height:1px;background:repeating-linear-gradient(to right,transparent 0 1px,#777 1px 2px)"></div>
<svg class="i" style="left:713px;top:306px" width="13" height="16"><use href="#fold"/></svg>
<svg class="i" style="left:693px;top:214px" width="13" height="16"><use href="#fold"/></svg>
<svg class="i" style="left:676px;top:371px" width="13" height="16"><use href="#foldup"/></svg>
<svg class="i" style="left:676px;top:390px" width="13" height="16"><use href="#fold"/></svg>
<svg class="i" style="left:676px;top:409px" width="13" height="16"><use href="#fold"/></svg>
<svg class="i" style="left:676px;top:428px" width="13" height="16"><use href="#fold"/></svg>
<svg class="i" style="left:676px;top:447px" width="13" height="16"><use href="#fold"/></svg>
<svg class="i" style="left:676px;top:466px" width="13" height="16"><use href="#fold"/></svg>
<svg class="i" style="left:853px;top:353px" width="9" height="5"><path d="M0 5L4.5 0L9 5z" fill="#000"/></svg>
<svg class="i" style="left:675px;top:574px" width="6" height="9"><path d="M5 1L1.5 4.5L5 8" fill="none" stroke="#555" stroke-width="1.2"/></svg>
<svg class="i" style="left:15px;top:641px" width="16" height="16"><use href="#ren"/></svg>
<svg class="i" style="left:100px;top:641px" width="16" height="16"><use href="#edit"/></svg>
<svg class="i" style="left:162px;top:641px" width="16" height="16"><use href="#dl"/></svg>
<svg class="i" style="left:258px;top:641px" width="16" height="16"><use href="#dl"/></svg>
<svg class="i" style="left:413px;top:641px" width="16" height="16"><use href="#fnew"/></svg>
<svg class="i" style="left:540px;top:641px" width="16" height="16"><use href="#xg"/></svg>
<svg class="i" style="left:615px;top:641px" width="16" height="16"><use href="#props"/></svg>
<svg class="i" style="left:710px;top:641px" width="16" height="16"><use href="#quit"/></svg>
<svg class="i" style="left:10px;top:692px" width="16" height="16"><use href="#qdocs"/></svg>
<svg class="i" style="left:39.5px;top:693px" width="13" height="15"><use href="#play"/></svg>
<svg class="i" style="left:61px;top:692px" width="15" height="15"><use href="#xg"/></svg>
<svg class="i" style="left:92px;top:692px" width="12" height="16"><use href="#uarr"/></svg>
<svg class="i" style="left:115px;top:692px" width="12" height="16"><use href="#darrg"/></svg>
<svg class="i" style="left:142px;top:692px" width="16" height="16"><use href="#qcirc"/></svg>
<svg class="i" style="left:169px;top:692px" width="16" height="16"><use href="#gearg"/></svg>
<svg class="i" style="left:162px;top:699px" width="4" height="3"><path d="M0 0h4L4 3z" fill="#555"/></svg>
<!-- FIND DIALOG -->
<div class="a" style="left:10px;top:153px;width:646px;height:481px;background:#65c9e8;border:1px solid #1e4c5e"></div>
<div class="t" style="left:319.7px;top:160px;font-size:15px;line-height:18px;color:#111;-webkit-text-stroke:0;transform:scaleX(0.9148)">Find</div>
<div class="a" style="left:549px;top:153px;width:101px;height:22px;border:1px solid #1e4c5e;border-top:none"></div>
<div class="a" style="left:604px;top:153px;width:46px;height:22px;background:#c85a4c;border:1px solid #1e4c5e;border-top:none"></div>
<div class="a" style="left:577px;top:153px;width:1px;height:22px;background:#1e4c5e"></div>
<div class="a" style="left:18px;top:184px;width:630px;height:441px;background:#f0f0f0"></div>
<!-- filter group -->
<div class="a" style="left:27px;top:197px;width:527px;height:119px;border:1px solid #dcdcdc;border-radius:2px"></div>
<div class="a" style="left:31px;top:190px;width:29px;height:14px;background:#f0f0f0"></div>
<div class="t" style="left:33.4px;top:191px;transform:scaleX(0.9036)">Filter</div>
<div class="t" style="left:74.2px;top:211px;transform:scaleX(0.8631)"><u>F</u>ile mask:</div>
<div class="a" style="left:75px;top:226px;width:384px;height:21px;background:#fff;border:1px solid #abadb3"></div>
<div class="t" style="left:77.2px;top:230px;transform:scaleX(0.9037)">BBC01*/</div>
<div class="btn" style="left:465px;top:224px;width:78px;height:23px"></div>
<div class="t" style="left:487.9px;top:229px;transform:scaleX(0.9613)">Edit...</div>
<div class="t" style="left:407.3px;top:249px;transform:scaleX(0.8700)">mask hints</div>
<div class="a" style="left:407px;top:263px;width:50px;height:1px;background:repeating-linear-gradient(to right,#333 0 2px,transparent 2px 3px)"></div>
<div class="t" style="left:74.2px;top:261.5px;transform:scaleX(0.8789)">Sear<u>c</u>h in:</div>
<div class="a" style="left:75px;top:277px;width:469px;height:21px;background:#fff;border:1px solid #abadb3"></div>
<div class="t" style="left:78px;top:282px">/</div>
<!-- buttons -->
<div class="btn" style="left:563px;top:196px;width:78px;height:23px;border-color:#3c7fb1"></div>
<div class="t" style="left:589.7px;top:201.5px;transform:scaleX(0.9785)">Start</div>
<div class="btn" style="left:563px;top:228px;width:78px;height:23px"></div>
<div class="t" style="left:588px;top:234px;transform:scaleX(0.8635)">Close</div>
<div class="btn" style="left:563px;top:260px;width:78px;height:23px"></div>
<div class="t" style="left:590px;top:266px;transform:scaleX(0.8790)">Help</div>
<div class="btn" style="left:563px;top:327px;width:78px;height:23px;background:#f4f4f4;border-color:#cfcfcf"></div>
<div class="t g" style="left:587px;top:333px;transform:scaleX(0.8688)">Focus</div>
<div class="btn" style="left:562px;top:358px;width:78px;height:23px"></div>
<div class="t" style="left:587.5px;top:364px;transform:scaleX(0.8745)">Copy</div>
<!-- list -->
<div class="a" style="left:26px;top:326px;width:529px;height:277px;background:#fff;border:1px solid #828790"></div>
<div class="a" style="left:27px;top:346px;width:527px;height:1px;background:#e5e5e5"></div>
<div class="a" style="left:153px;top:327px;width:1px;height:19px;background:#e5e5e5"></div>
<div class="a" style="left:513px;top:327px;width:1px;height:19px;background:#e5e5e5"></div>
<div class="t" style="left:34.1px;top:330.5px;transform:scaleX(0.9683)">Name</div>
<div class="t" style="left:159.6px;top:330.5px;transform:scaleX(0.9830)">Directory</div>
<div class="t" style="left:50.1px;top:349.5px;transform:scaleX(0.9599)">BBC01/</div>
<div class="t" style="left:159.6px;top:349.5px;transform:scaleX(0.9283)">.BBC01/</div>
<div class="t" style="left:50.1px;top:368.5px;transform:scaleX(0.9582)">BBA01/</div>
<div class="t" style="left:159.6px;top:368.5px;transform:scaleX(0.9345)">.BBC01/BBA01/</div>
<div class="t" style="left:50.1px;top:387.5px;transform:scaleX(0.9582)">BBA02/</div>
<div class="t" style="left:159.6px;top:387.5px;transform:scaleX(0.9345)">.BBC01/BBA02/</div>
<div class="t" style="left:50.1px;top:406.5px;transform:scaleX(0.9599)">BBD01/</div>
<div class="t" style="left:159.6px;top:406.5px;transform:scaleX(0.9344)">.BBC01/BBD01/</div>
<!-- h scrollbar -->
<div class="a" style="left:27px;top:584px;width:527px;height:17px;background:#fff;border-top:1px solid #e8e8e8"></div>
<div class="a" style="left:27px;top:584px;width:18px;height:17px;background:#fff;border:1px solid #dadada"></div>
<div class="a" style="left:536px;top:584px;width:18px;height:17px;background:#fff;border:1px solid #dadada"></div>
<div class="a" style="left:45px;top:584px;width:375px;height:17px;background:#dadada;border:1px solid #c8c8c8"></div>
<!-- status -->
<div class="a" style="left:18px;top:606px;width:630px;height:19px;background:#fff;border-top:1px solid #a0a0a0"></div>
<div class="t" style="left:20.4px;top:610.6px;transform:scaleX(0.9522)">Done.</div>
<svg class="i" style="left:20px;top:160px" width="16" height="16"><use href="#findic"/></svg>
<div class="a" style="left:558px;top:165px;width:10px;height:3px;background:#000"></div>
<div class="a" style="left:586px;top:161px;width:10px;height:8px;border:2px solid #000;border-top-width:2px"></div>
<svg class="i" style="left:621px;top:160px" width="10" height="8"><path d="M1.2 0.8L8.8 7.2M8.8 0.8L1.2 7.2" stroke="#000" stroke-width="2.7"/></svg>
<div class="a" style="left:603px;top:153px;width:1px;height:22px;background:#1e4c5e"></div>
<svg class="i" style="left:38px;top:213px" width="30" height="31"><use href="#fbino"/></svg>
<svg class="i" style="left:445px;top:234px" width="9" height="6"><use href="#chev"/></svg>
<svg class="i" style="left:530px;top:285px" width="9" height="6"><use href="#chev"/></svg>
<svg class="i" style="left:130px;top:226px" width="34" height="21"><path fill-rule="evenodd" d="M0.9 10L17.3 0.6V4.2H32.7V16H17.3V19.9Z M9 10L14.6 6.8V8.4H28.5V12H14.6V13.3Z" fill="#e41e2a"/></svg>
<svg class="i" style="left:168px;top:228px" width="11" height="16"><path d="M3.5 1H7V13H10V16H0.5V13H3.5V5L0.5 6.5V3.5Z" fill="#e41e2a"/></svg>
<svg class="i" style="left:258px;top:377px" width="40" height="24"><path fill-rule="evenodd" d="M1.2 11.4L21.4 1.5V4.9H38.6V17.9H21.4V22.5Z M9.6 11.4L17.6 7.6V9.1H34.4V13.7H17.6V15.2Z" fill="#e41e2a"/></svg>
<div class="t" style="left:306px;top:376px;font-weight:bold;font-size:20px;line-height:20px;color:#e41e2a">2</div>
<svg class="i" style="left:33px;top:348px" width="13" height="16"><use href="#fold"/></svg>
<svg class="i" style="left:33px;top:367px" width="13" height="16"><use href="#fold"/></svg>
<svg class="i" style="left:33px;top:386px" width="13" height="16"><use href="#fold"/></svg>
<svg class="i" style="left:33px;top:405px" width="13" height="16"><use href="#fold"/></svg>
<svg class="i" style="left:32px;top:588px" width="6" height="9"><path d="M5 1L1.5 4.5L5 8" fill="none" stroke="#555" stroke-width="1.2"/></svg>
<svg class="i" style="left:542px;top:588px" width="6" height="9"><path d="M1 1L4.5 4.5L1 8" fill="none" stroke="#555" stroke-width="1.2"/></svg>
<div class="a" style="left:228px;top:589px;width:7px;height:7px;background:repeating-linear-gradient(to right,#606060 0 1px,transparent 1px 3px)"></div>
<div class="a" style="left:638px;top:615px;width:9px;height:9px;background:radial-gradient(circle,#a8a8a8 0.8px,transparent 1px) 0 0/3px 3px;clip-path:polygon(100% 0,100% 100%,0 100%)"></div>
<div class="a" style="left:914px;top:0;width:2px;height:759px;background:#fff"></div>
</body></html>
